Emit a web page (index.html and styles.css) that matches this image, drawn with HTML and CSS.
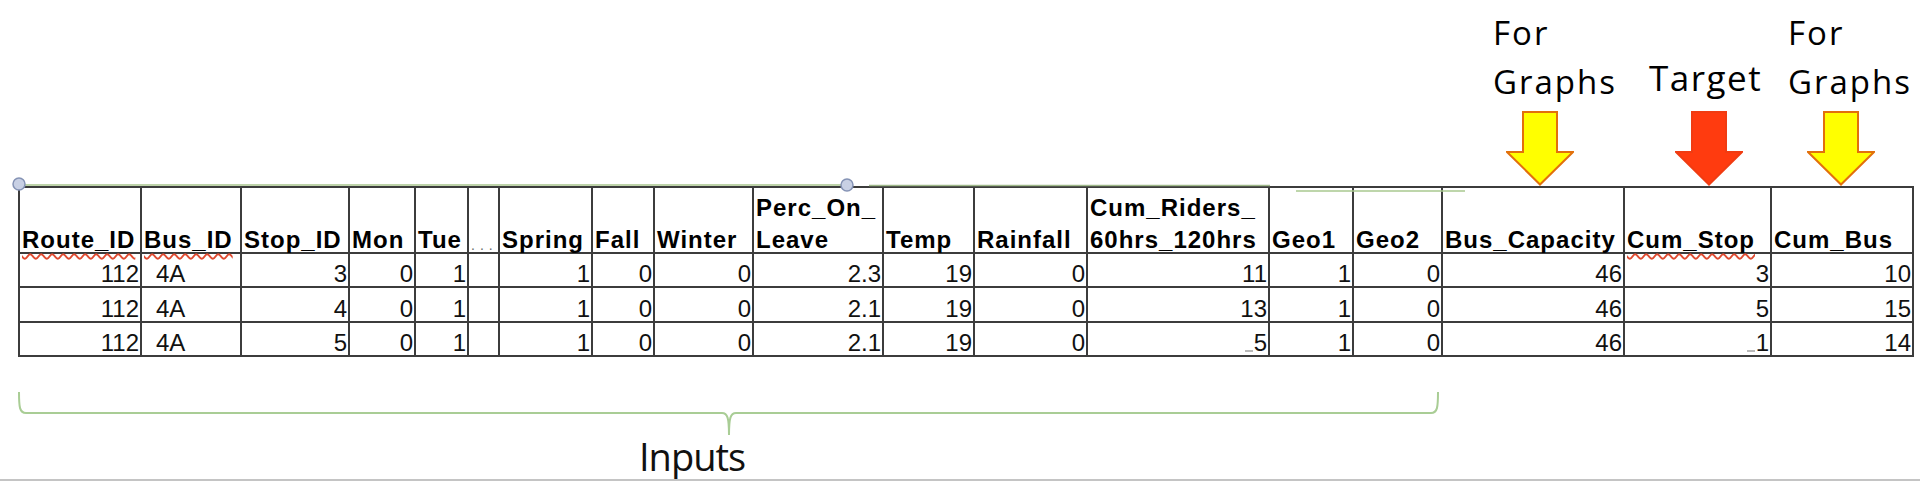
FILE: index.html
```html
<!DOCTYPE html>
<html lang="en">
<head>
<meta charset="utf-8">
<title>Bus ridership features</title>
<link rel="stylesheet" href="styles.css">
</head>
<body>
<div class="page">
  <div class="notes">
    <div class="note note-g1">
      <div class="note-label">For<br>Graphs</div>
      <svg class="arrow arrow-g1" viewBox="0 0 68 75"><path d="M17 1 H51 V41 H67 L34 73.5 L1 41 H17 Z" fill="#ffff00" stroke="#e2700c" stroke-width="2" stroke-linejoin="miter"/></svg>
    </div>
    <div class="note note-t">
      <div class="note-label target">Target</div>
      <svg class="arrow arrow-t" viewBox="0 0 68 75"><path d="M17 1 H51 V41 H67 L34 73.5 L1 41 H17 Z" fill="#ff3b0f" stroke="#f03c12" stroke-width="2"/></svg>
    </div>
    <div class="note note-g2">
      <div class="note-label">For<br>Graphs</div>
      <svg class="arrow arrow-g2" viewBox="0 0 68 75"><path d="M17 1 H51 V41 H67 L34 73.5 L1 41 H17 Z" fill="#ffff00" stroke="#e2700c" stroke-width="2"/></svg>
    </div>
  </div>

  <div class="sheet">
    <div class="c h"><span class="ht spell">Route_ID</span></div>
    <div class="c h"><span class="ht spell">Bus_ID</span></div>
    <div class="c h"><span class="ht">Stop_ID</span></div>
    <div class="c h"><span class="ht">Mon</span></div>
    <div class="c h"><span class="ht">Tue</span></div>
    <div class="c h"><span class="dots">...</span></div>
    <div class="c h"><span class="ht">Spring</span></div>
    <div class="c h"><span class="ht">Fall</span></div>
    <div class="c h"><span class="ht">Winter</span></div>
    <div class="c h"><span class="ht">Perc_On_<br>Leave</span></div>
    <div class="c h"><span class="ht">Temp</span></div>
    <div class="c h"><span class="ht">Rainfall</span></div>
    <div class="c h"><span class="ht">Cum_Riders_<br>60hrs_120hrs</span></div>
    <div class="c h"><span class="ht">Geo1</span></div>
    <div class="c h"><span class="ht">Geo2</span></div>
    <div class="c h"><span class="ht">Bus_Capacity</span></div>
    <div class="c h"><span class="ht spell">Cum_Stop</span></div>
    <div class="c h"><span class="ht">Cum_Bus</span></div>

    <div class="c n">112</div><div class="c t">4A</div><div class="c n">3</div><div class="c n">0</div><div class="c n">1</div><div class="c"></div><div class="c n">1</div><div class="c n">0</div><div class="c n">0</div><div class="c n">2.3</div><div class="c n">19</div><div class="c n">0</div><div class="c n">11</div><div class="c n">1</div><div class="c n">0</div><div class="c n">46</div><div class="c n">3</div><div class="c n">10</div>

    <div class="c n">112</div><div class="c t">4A</div><div class="c n">4</div><div class="c n">0</div><div class="c n">1</div><div class="c"></div><div class="c n">1</div><div class="c n">0</div><div class="c n">0</div><div class="c n">2.1</div><div class="c n">19</div><div class="c n">0</div><div class="c n">13</div><div class="c n">1</div><div class="c n">0</div><div class="c n">46</div><div class="c n">5</div><div class="c n">15</div>

    <div class="c n">112</div><div class="c t">4A</div><div class="c n">5</div><div class="c n">0</div><div class="c n">1</div><div class="c"></div><div class="c n">1</div><div class="c n">0</div><div class="c n">0</div><div class="c n">2.1</div><div class="c n">19</div><div class="c n">0</div><div class="c n"><span class="neg"></span>5</div><div class="c n">1</div><div class="c n">0</div><div class="c n">46</div><div class="c n"><span class="neg"></span>1</div><div class="c n">14</div>
  </div>

  <div class="bottom">
    <svg class="brace" viewBox="0 0 1440 46" width="1440" height="46">
      <path d="M19 2 C19 17 19.5 23 26 23 L722 23 C727.5 23 729 28 729 45 C729 28 730.5 23 736 23 L1431 23 C1437.5 23 1438 17 1438 2" fill="none" stroke="#a9cd95" stroke-width="2"/>
    </svg>
    <div class="inputs">Inputs</div>
  </div>
  <div class="rule"></div>

  <svg class="overlay" viewBox="0 0 1920 200" width="1920" height="200">
    <line x1="19" y1="185" x2="841" y2="185" stroke="#a7c58c" stroke-width="1.6"/>
    <line x1="869" y1="185.5" x2="1270" y2="185.5" stroke="#9fb98a" stroke-width="1.4"/>
    <line x1="1296" y1="191" x2="1465" y2="191" stroke="#a9c98f" stroke-width="1.6"/>
    <circle cx="19" cy="184" r="6" fill="#c8d0e4" stroke="#8593b5" stroke-width="1.5"/>
    <circle cx="847" cy="185" r="6" fill="#c8d0e4" stroke="#8593b5" stroke-width="1.5"/>
  </svg>
</div>
</body>
</html>
```

FILE: styles.css
```css
* { box-sizing: border-box; }

html, body {
  margin: 0;
  padding: 0;
  background: #ffffff;
}

body {
  width: 1920px;
  height: 481px;
  overflow: hidden;
  font-family: "Liberation Sans", Arial, sans-serif;
  color: #111111;
}

.page {
  position: relative;
  width: 1920px;
  height: 481px;
  display: flex;
  flex-direction: column;
}

/* annotations above the sheet */
.notes {
  height: 186px;
  flex: 0 0 186px;
  display: flex;
  align-items: flex-end;
  padding-left: 1493px;
}

.note {
  display: flex;
  flex-direction: column;
  align-items: flex-start;
  flex: 0 0 auto;
}

.note-g1 { width: 156px; }
.note-t { width: 139px; }
.note-g2 { width: 132px; }

.note-label {
  font-family: "Open Sans", sans-serif;
  font-size: 33px;
  line-height: 49px;
  letter-spacing: 2px;
  white-space: nowrap;
  color: #000000;
  margin-bottom: 5px;
}

.note-label.target {
  font-size: 35px;
  line-height: 44px;
  letter-spacing: 1.5px;
  margin-bottom: 11px;
}

.arrow {
  display: block;
  width: 68px;
  height: 75px;
}

.arrow-g1 { margin-left: 13px; }
.arrow-t { margin-left: 26px; }
.arrow-g2 { margin-left: 19px; }

/* spreadsheet */
.sheet {
  margin-left: 18px;
  width: 1896px;
  flex: 0 0 auto;
  display: grid;
  grid-template-columns: 122px 100px 108px 66px 53px 31px 93px 62px 99px 130px 91px 113px 182px 84px 89px 182px 147px 142px;
  grid-template-rows: 66px 34px 35px 34px;
  border-left: 2px solid #3c3c3c;
  border-top: 2px solid #3c3c3c;
}

.c {
  border-right: 2px solid #3c3c3c;
  border-bottom: 2px solid #3c3c3c;
  display: flex;
  align-items: flex-end;
  font-size: 24px;
  line-height: 24px;
  white-space: nowrap;
  overflow: visible;
}

.h {
  justify-content: flex-start;
  padding-left: 2px;
  font-weight: bold;
  letter-spacing: 1px;
  color: #000000;
}

.ht {
  display: block;
  line-height: 32px;
  margin-bottom: -4px;
}

.spell {
  text-decoration-line: underline;
  text-decoration-style: wavy;
  text-decoration-color: #e04a30;
  text-decoration-thickness: 1.5px;
  text-underline-offset: 5px;
}

.dots {
  display: block;
  font-size: 14px;
  line-height: 14px;
  letter-spacing: 5px;
  font-weight: normal;
  color: #6a6a6a;
}

.n {
  justify-content: flex-end;
  padding-right: 1px;
}

.t {
  justify-content: flex-start;
  padding-left: 14px;
}

.neg {
  display: inline-block;
  width: 8px;
  height: 2px;
  background: #b9b9b9;
  margin-right: 1px;
  margin-bottom: 3px;
}

/* bottom brace */
.bottom {
  height: 122px;
  flex: 0 0 122px;
}

.brace {
  display: block;
  margin-top: 33px;
}

.inputs {
  font-family: "Open Sans", sans-serif;
  font-size: 38px;
  line-height: 40px;
  letter-spacing: -1px;
  margin-left: 639px;
  color: #111111;
}

.rule {
  height: 2px;
  flex: 0 0 2px;
  background: #c4c4c4;
}

/* selected connector over the sheet's top edge */
.overlay {
  position: absolute;
  left: 0;
  top: 0;
  width: 1920px;
  height: 200px;
  pointer-events: none;
}
```
